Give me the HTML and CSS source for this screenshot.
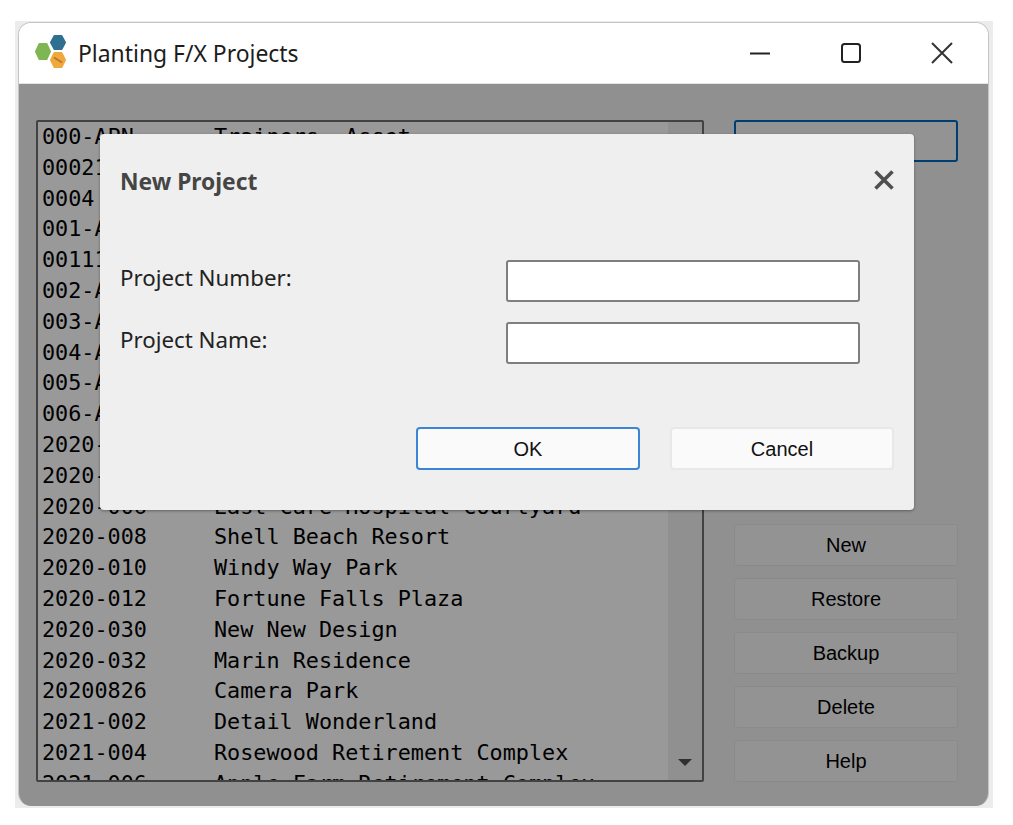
FILE: index.html
```html
<!DOCTYPE html>
<html lang="en">
<head>
    <meta charset="UTF-8">
    <title>Planting F/X Projects</title>
    <link rel="stylesheet" href="styles.css">
</head>
<body>
    <div class="frame">
        <div class="window">
            <div class="titlebar">
                <svg class="app-icon" width="36" height="36" viewBox="0 0 36 36">
                    <polygon points="1,18.5 4.5,11 11.5,11 15,18.5 11.5,26 4.5,26" fill="#7fb654" stroke="#7fb654" stroke-width="2" stroke-linejoin="round"/>
                    <polygon points="16,9.5 19.5,3 26.5,3 30,9.5 26.5,16 19.5,16" fill="#2f6f8f" stroke="#2f6f8f" stroke-width="2" stroke-linejoin="round"/>
                    <polygon points="16,27 19.5,20 26.5,20 30,27 26.5,34 19.5,34" fill="#f0a83c" stroke="#f0a83c" stroke-width="2" stroke-linejoin="round"/>
                    <path d="M19 24.5L27 29.5" stroke="#a8792e" stroke-width="1.6"/>
                </svg>
                <span class="app-title">Planting F/X Projects</span>
                <div class="win-controls">
                    <svg width="22" height="22" viewBox="0 0 22 22"><path d="M1 11.5H21" stroke="#222" stroke-width="2"/></svg>
                    <svg width="22" height="22" viewBox="0 0 22 22"><rect x="2" y="2" width="18" height="18" rx="2.5" fill="none" stroke="#222" stroke-width="2"/></svg>
                    <svg width="22" height="22" viewBox="0 0 22 22"><path d="M1 1L21 21M21 1L1 21" stroke="#333" stroke-width="2"/></svg>
                </div>
            </div>

            <div class="content">
                <div class="project-list">
                    <div class="rows">
                        <div class="row"><span class="num">000-APN</span><span>Trainers  Asset</span></div>
                        <div class="row"><span class="num">00021</span><span>Sample Project</span></div>
                        <div class="row"><span class="num">0004</span><span>Office Campus</span></div>
                        <div class="row"><span class="num">001-A</span><span>Arbor Court</span></div>
                        <div class="row"><span class="num">00111</span><span>Test Project</span></div>
                        <div class="row"><span class="num">002-A</span><span>Lakeside Commons</span></div>
                        <div class="row"><span class="num">003-A</span><span>Maple Street</span></div>
                        <div class="row"><span class="num">004-A</span><span>Harbor View</span></div>
                        <div class="row"><span class="num">005-A</span><span>Cedar Grove</span></div>
                        <div class="row"><span class="num">006-A</span><span>Riverside Walk</span></div>
                        <div class="row"><span class="num">2020-002</span><span>Town Square</span></div>
                        <div class="row"><span class="num">2020-004</span><span>Civic Center</span></div>
                        <div class="row"><span class="num">2020-006</span><span>East Care Hospital Courtyard</span></div>
                        <div class="row"><span class="num">2020-008</span><span>Shell Beach Resort</span></div>
                        <div class="row"><span class="num">2020-010</span><span>Windy Way Park</span></div>
                        <div class="row"><span class="num">2020-012</span><span>Fortune Falls Plaza</span></div>
                        <div class="row"><span class="num">2020-030</span><span>New New Design</span></div>
                        <div class="row"><span class="num">2020-032</span><span>Marin Residence</span></div>
                        <div class="row"><span class="num">20200826</span><span>Camera Park</span></div>
                        <div class="row"><span class="num">2021-002</span><span>Detail Wonderland</span></div>
                        <div class="row"><span class="num">2021-004</span><span>Rosewood Retirement Complex</span></div>
                        <div class="row"><span class="num">2021-006</span><span>Apple Farm Retirement Complex</span></div>
                    </div>
                    <div class="scrollbar">
                        <span class="arrow-down"></span>
                    </div>
                </div>

                <div class="actions">
                    <button class="btn btn-default">Open</button>
                    <div class="actions-bottom">
                        <button class="btn">New</button>
                        <button class="btn">Restore</button>
                        <button class="btn">Backup</button>
                        <button class="btn">Delete</button>
                        <button class="btn">Help</button>
                    </div>
                </div>

                <div class="overlay"></div>

                <div class="dialog">
                    <div class="dialog-head">
                        <h2>New Project</h2>
                        <svg width="22" height="22" viewBox="0 0 22 22"><path d="M2.5 2.5L19.5 19.5M19.5 2.5L2.5 19.5" stroke="#505050" stroke-width="3.6"/></svg>
                    </div>
                    <div class="form">
                        <label>Project Number:</label>
                        <input type="text">
                        <label>Project Name:</label>
                        <input type="text">
                    </div>
                    <div class="dialog-buttons">
                        <button class="dlg-btn dlg-ok">OK</button>
                        <button class="dlg-btn">Cancel</button>
                    </div>
                </div>
            </div>
        </div>
    </div>
</body>
</html>
```

FILE: styles.css
```css
body {
    margin: 0;
    background: white;
    font-family: "Noto Sans", sans-serif;
}
.frame {
    width: 978px;
    height: 787px;
    margin: 21px 0 0 15px;
    padding: 1px 4px 2px 3px;
    box-sizing: border-box;
    background: #ececec;
}
.window {
    height: 100%;
    display: flex;
    flex-direction: column;
    border: 1px solid #c4c4c4;
    border-bottom: none;
    border-radius: 13px;
    overflow: hidden;
    box-sizing: border-box;
}
.titlebar {
    height: 60px;
    flex: none;
    display: flex;
    align-items: center;
    padding-left: 16px;
    background: white;
    border-bottom: 1px solid #e4e4e4;
}
.app-icon {
    flex: none;
    margin-top: -4px;
}
.app-title {
    margin-left: 7px;
    font-size: 22.9px;
    color: #1c1c1c;
}
.win-controls {
    margin-left: auto;
    display: flex;
    gap: 69px;
    padding-right: 35px;
}

/* everything below the title bar gets dimmed by .overlay */
.content {
    position: relative;
    flex: 1;
    display: flex;
    gap: 30px;
    padding: 36px 30px 24px 17px;
    background: #f0f0f0;
    min-height: 0;
}
.project-list {
    width: 668px;
    flex: none;
    display: flex;
    overflow: hidden;
    box-sizing: border-box;
    border: 2px solid #6f6f6f;
    border-radius: 2px;
    background: white;
}
.rows {
    flex: 1;
    overflow: hidden;
    padding-left: 4px;
    font-family: "DejaVu Sans Mono", monospace;
    font-size: 21.8px;
    color: black;
}
.row {
    display: flex;
    height: 30.8px;
    line-height: 30.8px;
    white-space: pre;
}
.num {
    width: 172px;
    flex: none;
}
.scrollbar {
    width: 34px;
    flex: none;
    position: relative;
    background: #f0f0f0;
}
.arrow-down {
    position: absolute;
    right: 10px;
    bottom: 14px;
    border-left: 7px solid transparent;
    border-right: 7px solid transparent;
    border-top: 7px solid #505050;
}
.actions {
    flex: 1;
    display: flex;
    flex-direction: column;
    justify-content: space-between;
}
.actions-bottom {
    display: flex;
    flex-direction: column;
    gap: 12px;
}
.btn {
    height: 42px;
    padding: 0;
    background: #f6f6f6;
    border: 1px solid #e6e6e6;
    border-radius: 3px;
    font-family: "Liberation Sans", sans-serif;
    font-size: 20px;
    color: black;
}
.btn-default {
    border: 2px solid #0067c0;
    background: #f6f6f6;
}
.overlay {
    position: absolute;
    inset: 0;
    background: rgba(0, 0, 0, 0.4);
}
.dialog {
    position: absolute;
    left: 81px;
    top: 50px;
    width: 814px;
    height: 376px;
    box-sizing: border-box;
    padding: 0 20px 40px 20px;
    display: flex;
    flex-direction: column;
    background: #efefef;
    border-radius: 4px;
    box-shadow: 0 1px 3px rgba(0, 0, 0, 0.35);
}
.dialog-head {
    height: 94px;
    display: flex;
    align-items: center;
    justify-content: space-between;
}
.dialog-head h2 {
    margin: 0;
    font-size: 22.8px;
    font-weight: 700;
    color: #454545;
}
.dialog-head svg {
    margin-top: -3px;
    margin-right: -1px;
}
.form {
    margin-top: 32px;
    display: grid;
    grid-template-columns: 386px 354px;
    row-gap: 20px;
    align-items: center;
}
.form label {
    padding-bottom: 8px;
    font-size: 22.3px;
    color: #222;
}
.form input {
    height: 42px;
    box-sizing: border-box;
    padding: 0 6px;
    background: white;
    border: 2px solid #7f7f7f;
    border-radius: 3px;
}
.dialog-buttons {
    margin-top: auto;
    display: flex;
    justify-content: flex-end;
    gap: 30px;
}
.dlg-btn {
    width: 224px;
    height: 43px;
    padding: 2px 0 0;
    background: #fafafa;
    border: 2px solid #e8e8e8;
    border-radius: 4px;
    font-family: "Liberation Sans", sans-serif;
    font-size: 20px;
    color: #111;
}
.dlg-ok {
    border-color: #3c85d6;
}
```
